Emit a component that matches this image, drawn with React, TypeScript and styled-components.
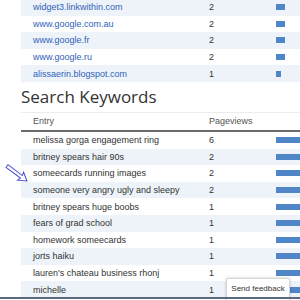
import React from 'react';
import styled, { createGlobalStyle } from 'styled-components';

const GlobalStyle = createGlobalStyle`
  html, body {
    margin: 0;
    padding: 0;
    background: #ffffff;
    overflow: hidden;
  }
  body {
    font-family: "Liberation Sans", Arial, sans-serif;
  }
`;

const referrers = [
  { entry: 'widget3.linkwithin.com', count: 2 },
  { entry: 'www.google.com.au', count: 2 },
  { entry: 'www.google.fr', count: 2 },
  { entry: 'www.google.ru', count: 2 },
  { entry: 'alissaerin.blogspot.com', count: 1 },
];

const keywords = [
  { entry: 'melissa gorga engagement ring', count: 6 },
  { entry: 'britney spears hair 90s', count: 2 },
  { entry: 'someecards running images', count: 2 },
  { entry: 'someone very angry ugly and sleepy', count: 2 },
  { entry: 'britney spears huge boobs', count: 1 },
  { entry: 'fears of grad school', count: 1 },
  { entry: 'homework someecards', count: 1 },
  { entry: 'jorts haiku', count: 1 },
  { entry: "lauren's chateau business rhonj", count: 1 },
  { entry: 'michelle', count: 1 },
];

const App = () => {
  return (
    <>
      <GlobalStyle />
      <Page>
        <Table>
          {referrers.map((r, i) => (
            <Row key={r.entry} $striped={i % 2 === 0}>
              <EntryCell $link>{r.entry}</EntryCell>
              <CountCell>{r.count}</CountCell>
              <BarCell>
                <Bar style={{ width: r.count * 4.5 }} />
              </BarCell>
            </Row>
          ))}
        </Table>

        <Heading>Search Keywords</Heading>

        <Table>
          <HeaderRow>
            <EntryCell>Entry</EntryCell>
            <CountCell>Pageviews</CountCell>
            <BarCell />
          </HeaderRow>
          {keywords.map((k, i) => (
            <Row key={k.entry} $striped={i % 2 === 1}>
              <EntryCell>{k.entry}</EntryCell>
              <CountCell>{k.count}</CountCell>
              <BarCell>
                <Bar style={{ width: 30 + k.count * 20 }} />
              </BarCell>
            </Row>
          ))}
        </Table>
      </Page>

      <Pointer width="30" height="26" viewBox="0 0 30 26">
        <g transform="translate(3 3) rotate(37)">
          <polygon
            points="0,-1.6 18,-1.6 17,-5 25,0 17,5 18,1.6 0,1.6"
            fill="#ffffff"
            stroke="#4b4bd0"
            strokeWidth="1"
            strokeLinejoin="miter"
          />
        </g>
      </Pointer>

      <Feedback>Send feedback</Feedback>
      <WindowEdge />
    </>
  );
};

export default App;

const Page = styled.div`
  margin-top: -1px;
  padding-left: 21px;
  width: 279px;
  overflow: hidden;
`;

const Table = styled.div`
  display: flex;
  flex-direction: column;
`;

const Row = styled.div<{ $striped?: boolean }>`
  display: flex;
  align-items: center;
  height: 16.6px;
  background: ${(p) => (p.$striped ? '#eef3fa' : '#ffffff')};
  font-size: 9px;
  color: #333333;
`;

const HeaderRow = styled.div`
  display: flex;
  align-items: center;
  height: 17px;
  border-top: 1px solid #ececec;
  border-bottom: 2px solid #6b6b6b;
  font-size: 9px;
  color: #555555;
`;

const EntryCell = styled.div<{ $link?: boolean }>`
  flex: none;
  width: 176px;
  padding-left: 12px;
  white-space: nowrap;
  color: ${(p) => (p.$link ? '#3062b8' : 'inherit')};
`;

const CountCell = styled.div`
  flex: none;
  width: 67px;
  white-space: nowrap;
`;

const BarCell = styled.div`
  flex: none;
  width: 120px;
  display: flex;
  align-items: center;
`;

const Bar = styled.div`
  flex: none;
  height: 6px;
  background: #4f86c8;
`;

const Heading = styled.h2`
  margin: 5px 0 5px 0;
  font-family: "Open Sans", "Liberation Sans", sans-serif;
  font-weight: 400;
  font-size: 17px;
  line-height: 20px;
  color: #333333;
`;

const Pointer = styled.svg`
  position: absolute;
  left: 4px;
  top: 163px;
`;

const Feedback = styled.div`
  position: absolute;
  left: 226px;
  top: 278px;
  width: 64px;
  height: 22px;
  box-sizing: border-box;
  padding-top: 5px;
  background: #ffffff;
  border: 1px solid #d6d6d6;
  border-bottom: none;
  border-radius: 2px 2px 0 0;
  box-shadow: 0 0 3px rgba(0, 0, 0, 0.2);
  font-size: 8px;
  color: #333333;
  text-align: center;
  white-space: nowrap;
`;

const WindowEdge = styled.div`
  position: fixed;
  left: 0;
  right: 0;
  bottom: 1px;
  height: 2px;
  background: #5a6a7e;
`;
